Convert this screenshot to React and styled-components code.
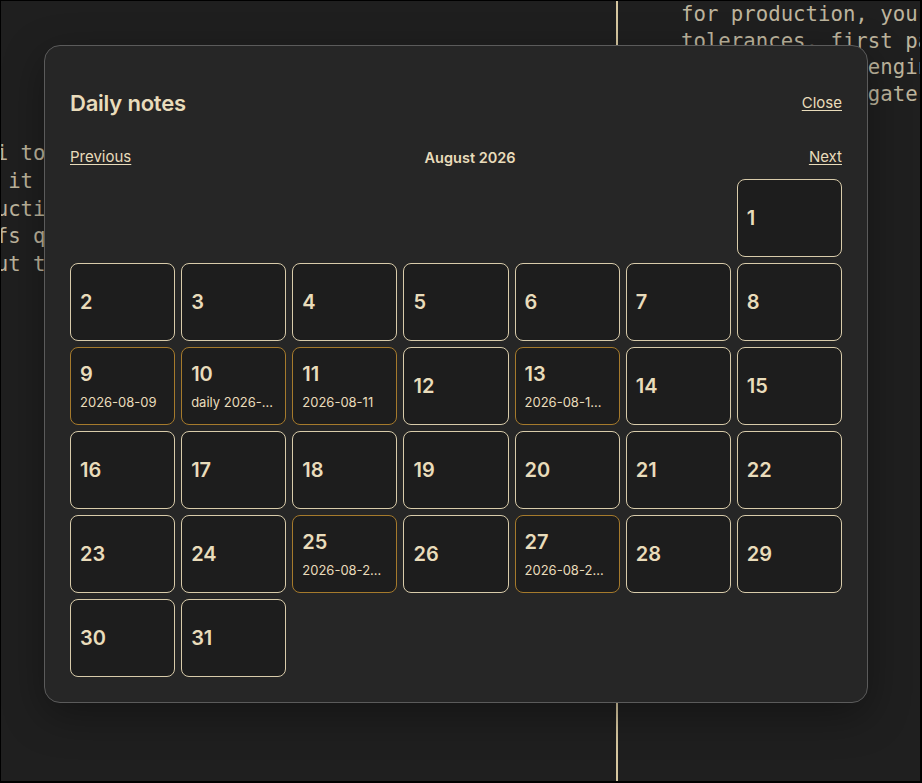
import React from 'react'
import styled, { createGlobalStyle } from 'styled-components'

const GlobalStyle = createGlobalStyle`
    html, body {
        margin: 0;
        padding: 0;
        background: #000;
    }
    * {
        box-sizing: border-box;
    }
`

const leftLines = [
    'a ui to expose the toggle in settings',
    'and it ships behind a flag for now',
    'reduction in build time was measured',
    'diffs quickly once the cache is warm',
    'about the rollout plan for next week',
]

const rightLines = [
    'for production, your',
    'tolerances, first pass',
    'pass it to the engineering',
    'tests pass the gate',
]

const notes = {
    9: '2026-08-09',
    10: 'daily 2026-08-10',
    11: '2026-08-11',
    13: '2026-08-13 standup',
    25: '2026-08-25 review',
    27: '2026-08-27 planning',
}

// August 2026 starts on a Saturday
const firstWeekday = 6
const daysInMonth = 31

export default function App() {
    const blanks = Array.from({ length: firstWeekday })
    const days = Array.from({ length: daysInMonth }, (_, i) => i + 1)

    return (
        <>
            <GlobalStyle />
            <Screen>
                <Pane>
                    <LeftText>
                        {leftLines.map((line, i) => <CodeLine key={i}>{line}</CodeLine>)}
                    </LeftText>
                </Pane>
                <Divider />
                <Pane>
                    <RightText>
                        {rightLines.map((line, i) => <CodeLine key={i}>{line}</CodeLine>)}
                    </RightText>
                </Pane>

                <Modal>
                    <Header>
                        <Title>Daily notes</Title>
                        <TextButton>Close</TextButton>
                    </Header>
                    <Nav>
                        <TextButton>Previous</TextButton>
                        <Month>August 2026</Month>
                        <TextButton>Next</TextButton>
                    </Nav>
                    <Grid>
                        {blanks.map((_, i) => <span key={'b' + i} />)}
                        {days.map((day) => (
                            <Day key={day} $hasNote={!!notes[day]}>
                                <DayNumber>{day}</DayNumber>
                                {notes[day] && <NoteName>{notes[day]}</NoteName>}
                            </Day>
                        ))}
                    </Grid>
                </Modal>
            </Screen>
        </>
    )
}

const Screen = styled.div`
    position: relative;
    width: 922px;
    height: 783px;
    border: 1px solid #000;
    border-right-width: 2px;
    border-bottom-width: 2px;
    background: #1f1f1f;
    display: grid;
    grid-template-columns: 615px 2px 1fr;
    overflow: hidden;
`

const Pane = styled.div`
    overflow: hidden;
    min-width: 0;
`

const Divider = styled.div`
    background: #d6c7a0;
`

const CodeLine = styled.div`
    white-space: pre;
    font-family: "DejaVu Sans Mono", "Liberation Mono", monospace;
    font-size: 20.7px;
    line-height: 26.5px;
    color: #bdb49d;
`

const LeftText = styled.div`
    margin-top: 139px;
    margin-left: -42.7px;

    ${CodeLine} {
        line-height: 27.8px;
    }
`

const RightText = styled.div`
    margin-top: 0;
    padding-left: 63px;
`

const Modal = styled.div`
    position: absolute;
    left: 43px;
    top: 44px;
    width: 824px;
    height: 658px;
    padding: 45px 25px 25px;
    background: #262626;
    border: 1px solid #5b5b5b;
    border-radius: 16px;
    box-shadow: 0 12px 40px rgba(0, 0, 0, 0.35);
    font-family: Inter, "Noto Sans", sans-serif;
    color: #e9dcbb;
`

const Header = styled.div`
    display: flex;
    justify-content: space-between;
    align-items: center;
    height: 24px;
`

const Title = styled.div`
    font-size: 22px;
    font-weight: 600;
    letter-spacing: -0.01em;
`

const TextButton = styled.span`
    font-size: 15px;
    line-height: 18px;
    text-decoration: underline;
    text-underline-offset: 2px;
    cursor: pointer;
`

const Nav = styled.div`
    display: flex;
    justify-content: space-between;
    align-items: center;
    height: 18px;
    margin-top: 33px;
`

const Month = styled.div`
    font-size: 14.5px;
    font-weight: 600;
`

const Grid = styled.div`
    display: grid;
    grid-template-columns: repeat(7, 1fr);
    grid-auto-rows: 78px;
    gap: 6px;
    margin-top: 13px;
`

const Day = styled.div`
    display: flex;
    flex-direction: column;
    justify-content: center;
    align-items: flex-start;
    gap: 8px;
    padding: 0 12px 0 9px;
    min-width: 0;
    background: #1d1d1d;
    border: 1px solid ${({ $hasNote }) => ($hasNote ? '#a57a2c' : '#d8cbaa')};
    border-radius: 8px;
    cursor: pointer;
`

const DayNumber = styled.div`
    font-size: 20px;
    font-weight: 600;
    line-height: 24px;
`

const NoteName = styled.div`
    width: 100%;
    font-size: 13px;
    line-height: 16px;
    white-space: nowrap;
    overflow: hidden;
    text-overflow: ellipsis;
`
